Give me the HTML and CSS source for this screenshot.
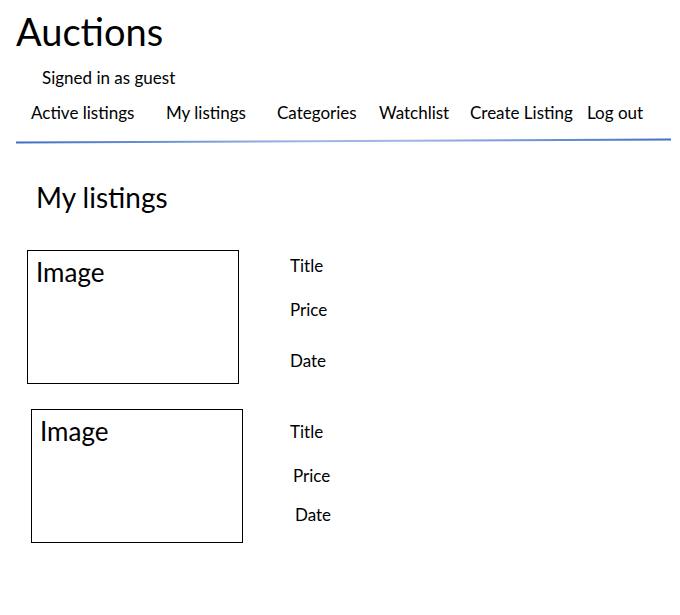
FILE: index.html
```html
<!DOCTYPE html>
<html>
<head>
<meta charset="utf-8">
<link rel="stylesheet" href="styles.css">
</head>
<body>
<header class="site-header">
  <h1 class="brand">Auctions</h1>
  <div class="signed">Signed in as guest</div>
  <nav class="nav">
    <a class="nav-link">Active listings</a>
    <a class="nav-link">My listings</a>
    <a class="nav-link">Categories</a>
    <a class="nav-link">Watchlist</a>
    <a class="nav-link">Create Listing</a>
    <a class="nav-link">Log out</a>
  </nav>
  <div class="rule"></div>
</header>
<main class="content">
  <h2 class="page-title">My listings</h2>
  <section class="listing listing-a">
    <div class="image-box">Image</div>
    <div class="details">
      <div class="d-title">Title</div>
      <div class="d-price">Price</div>
      <div class="d-date">Date</div>
    </div>
  </section>
  <section class="listing listing-b">
    <div class="image-box">Image</div>
    <div class="details">
      <div class="d-title">Title</div>
      <div class="d-price">Price</div>
      <div class="d-date">Date</div>
    </div>
  </section>
</main>
</body>
</html>
```
FILE: styles.css
```css
* { box-sizing: border-box; }
body {
  margin: 0;
  font-family: Lato, "Open Sans", sans-serif;
  color: #000;
  background: #fff;
}
.site-header { padding-top: 8px; }
.brand {
  margin: 0 0 0 16px;
  font-size: 38px;
  font-weight: 400;
  line-height: 46px;
}
.signed {
  margin: 14px 0 0 42px;
  font-size: 17px;
  line-height: 20px;
}
.nav {
  display: grid;
  grid-template-columns: 135px 111px 102px 91px 117px auto;
  margin: 15px 0 0 31px;
  font-size: 17px;
  line-height: 20px;
}
.nav-link { white-space: nowrap; }
.rule {
  margin: 17px 0 0 16px;
  width: 655px;
  height: 1.5px;
  background: linear-gradient(90deg, #3f6fc6, #9db8e4 45%, #9db8e4 60%, #3f6fc6);
  transform: rotate(-0.26deg);
}
.content { padding-top: 38px; }
.page-title {
  margin: 0 0 0 36px;
  font-size: 28px;
  font-weight: 400;
  line-height: 34px;
}
.listing { display: flex; }
.listing-a { margin: 36px 0 0 27px; }
.listing-b { margin: 25px 0 0 31px; }
.image-box {
  width: 212px;
  height: 134px;
  border: 1px solid #000;
  padding: 6px 0 0 8px;
  font-size: 26px;
  line-height: 30px;
}
.details {
  font-size: 17px;
  line-height: 20px;
}
.listing-a .details { margin-left: 51px; padding-top: 6px; }
.listing-a .d-price { margin-top: 24px; }
.listing-a .d-date { margin-top: 31px; }
.listing-b .details { margin-left: 47px; padding-top: 13px; }
.listing-b .d-price { margin-top: 24px; padding-left: 3px; }
.listing-b .d-date { margin-top: 19px; padding-left: 5px; }
```
